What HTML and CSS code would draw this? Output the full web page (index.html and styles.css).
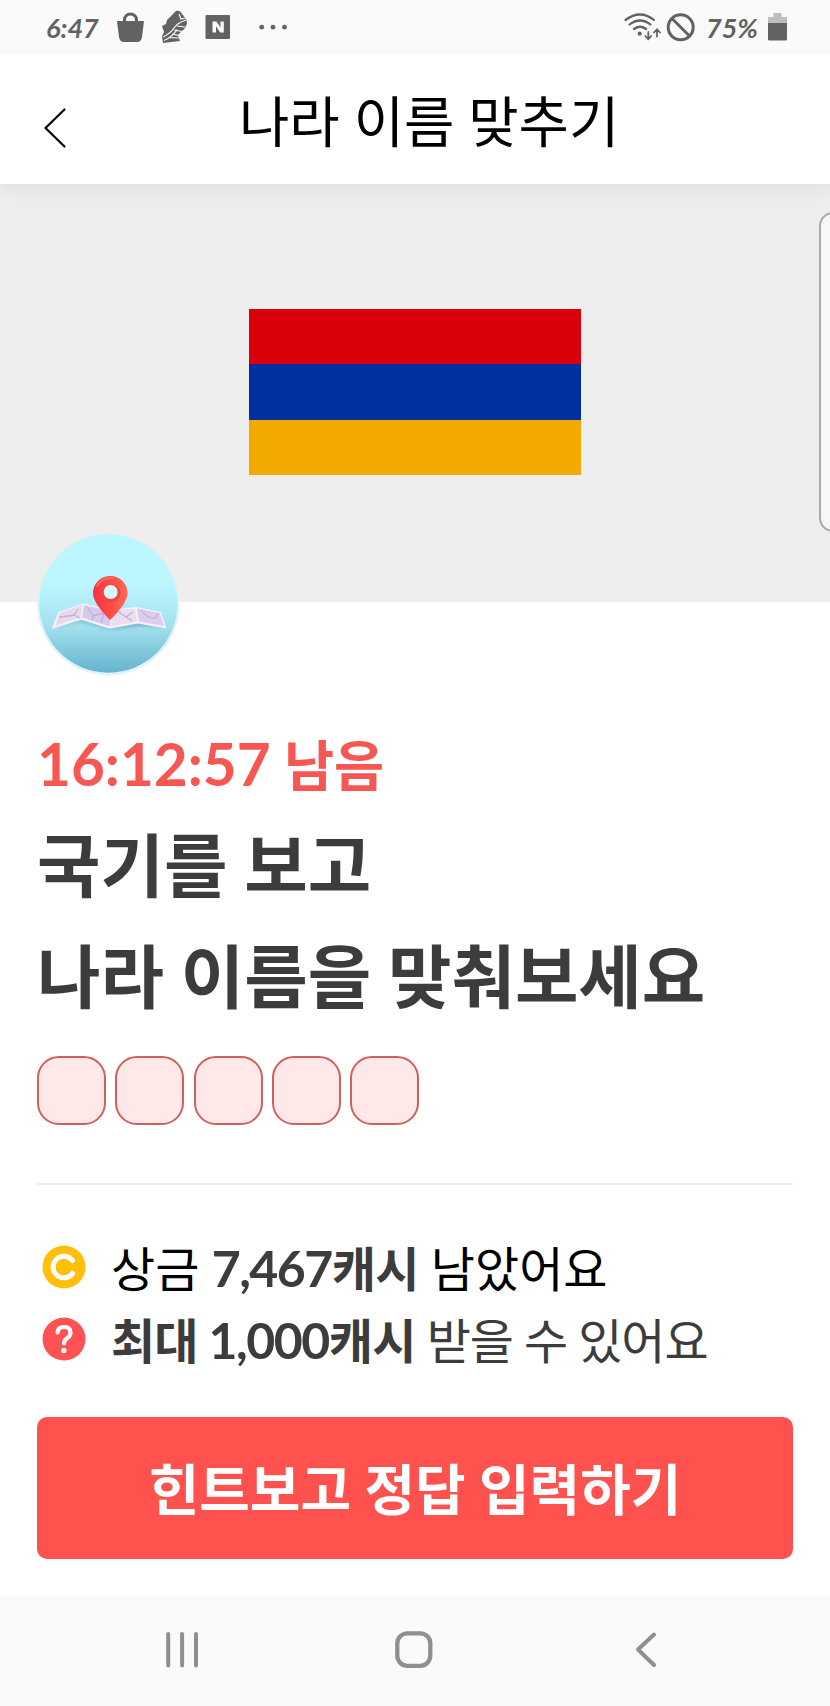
FILE: index.html
```html
<!DOCTYPE html>
<html lang="ko">
<head>
<meta charset="utf-8">
<title>나라 이름 맞추기</title>
<link rel="stylesheet" href="styles.css">
</head>
<body>
<div class="screen">
  <div class="status">
    <span class="clock">6:47</span>
    <svg class="status-icons" width="180" height="55" viewBox="110 0 180 55">
      <path d="M117 21h27l-2 16q-.6 5-5 5h-13q-4.400 0-5-5z" fill="#626262"/>
      <path d="M124.500 22v-2.500a6 5.500 0 0 1 12 0V22" fill="none" stroke="#626262" stroke-width="3"/>
      <path d="M162 26l4-2 1-4 7-7 2-2q4-1 6 3 5 5 5 9-1 5-5 8l-4 4 2 6-17 2-1-7 2-4z" fill="#626262"/>
      <path d="M163 37q8-4 11-9t12-8M164 40.500q9-4 13-11M177 26l8 1M174 30l8 1.500M172 34l7 1.500M169 37.500l10 .5M179 14l2 5 4-1" fill="none" stroke="#fafafa" stroke-width="1.200"/>
      <rect x="205.500" y="15" width="24.500" height="24" rx="1" fill="#626262"/>
      <path d="M212.500 32.500V21.500h4l4 6v-6h3.300v11h-3.600l-4.200-6.200v6.200z" fill="#fafafa"/>
      <g fill="#626262"><circle cx="261.700" cy="27.200" r="2.400"/><circle cx="273" cy="27.200" r="2.400"/><circle cx="284.500" cy="27.200" r="2.400"/></g>
    </svg>
    <svg class="radio-icons" width="74" height="55" viewBox="622 0 74 55">
      <g fill="none" stroke="#626262" stroke-width="2.200" stroke-linecap="round">
        <path d="M624.500 20q14.500-11 28.500 0M628.500 24.500q10.500-8 21 0M633 29q6-4.500 12 0"/>
        <path d="M647.300 32v7m-3-3 3 3.200 3-3.200M656 36.500v-7m-3 3 3-3.200 3 3.200" stroke-width="1.800"/>
        <circle cx="679.700" cy="27.300" r="12.500" stroke-width="3"/>
        <path d="M671 18.500l17.500 17.500" stroke-width="3"/>
      </g>
      <circle cx="638.700" cy="33.700" r="2.100" fill="#626262"/>
    </svg>
    <span class="percent">75%</span>
    <svg class="battery" width="19" height="28" viewBox="0 0 19 28">
      <path d="M5.500 0h8v4H19v6H0V4h5.500z" fill="#bdbdbd"/>
      <path d="M0 10h19v16q0 1.500-1.500 1.500h-16Q0 27.500 0 26z" fill="#626262"/>
    </svg>
  </div>
  <header class="header">
    <svg class="back" width="24" height="42" viewBox="0 0 24 42"><path d="M21.500 2.500 2.500 21 21.500 39.500" fill="none" stroke="#000" stroke-width="2.200" stroke-linecap="round" stroke-linejoin="round"/></svg>
    <h1 class="title">나라 이름 맞추기</h1>
  </header>
  <section class="hero">
    <div class="flag"><i class="red"></i><i class="blue"></i><i class="orange"></i></div>
    <div class="edge-panel"></div>
    <svg class="avatar" width="144" height="144" viewBox="36 532 144 144">
      <defs>
        <linearGradient id="sky" x1="0" y1="0" x2="0" y2="1"><stop offset="0" stop-color="#bcf6ff"/><stop offset=".35" stop-color="#bcf6ff"/><stop offset=".65" stop-color="#a5e2ee"/><stop offset="1" stop-color="#65b4cf"/></linearGradient>
        <linearGradient id="pin" x1="0" y1="0" x2="1" y2="0"><stop offset="0" stop-color="#f8303c"/><stop offset="1" stop-color="#ff6a55"/></linearGradient>
        <linearGradient id="ring" x1="0" y1="0" x2="0" y2="1"><stop offset="0" stop-color="#d8eff3"/><stop offset="1" stop-color="#e0f5fb"/></linearGradient>
        <filter id="soft"><feGaussianBlur stdDeviation="1.500"/></filter>
      </defs>
      <circle cx="108.400" cy="604.400" r="71" fill="url(#ring)"/>
      <circle cx="108.400" cy="603.700" r="69" fill="url(#sky)"/>
      <path d="M55 628l27-8 28 9 29-7 26 5-26-1-29 4-29-8z" fill="#568ea7" opacity=".6" filter="url(#soft)"/>
      <path d="M58.500 612 83 603.500l27 6 26.500-2.500 24.500 5 5.500 16.500-28.500-5L109 628.500l-28-9-29.500 9.500z" fill="#f6f1fc"/>
      <path d="M60 613l22-8-1.500 12.500-25 8z" fill="#e6d9e8"/>
      <path d="M84 605l26 6v15.500L82 617.500z" fill="#d8caef"/>
      <path d="M112 611l23-2.500 2 13-26 5z" fill="#ebdeee"/>
      <path d="M137 608.500l22.500 4.500 4.500 13-25-4.500z" fill="#dccdef"/>
      <path d="M59 617q11-1 15-2l4-6M74 615l6 3M87 607l6 9 11-3M93 616l-1 4M104 613l-3 10M117 611l9 6 7-5M126 617l6 4M141 610q6 9 15 8l2-5" fill="none" stroke="#c2b0d5" stroke-width="1.300"/>
      <path d="M110 620q-17-17-17-27a17.300 17 0 0 1 34.600 0q0 10-17.600 27z" fill="url(#pin)"/>
      <circle cx="111.500" cy="593" r="9" fill="#f14445"/>
      <circle cx="110.700" cy="592" r="7" fill="#d7f7fb"/>
      <path d="M97 586q5-9 15-8" fill="none" stroke="#ff7772" stroke-width="2" stroke-linecap="round" opacity=".7"/>
    </svg>
  </section>
  <main class="content">
    <p class="timer"><span class="time">16:12:57</span> 남음</p>
    <h2 class="question">국기를 보고<br>나라 이름을 맞춰보세요</h2>
    <div class="boxes"><i class="box"></i><i class="box"></i><i class="box"></i><i class="box"></i><i class="box"></i></div>
    <ul class="rewards">
      <li class="reward">
        <svg class="badge" width="44" height="44" viewBox="0 0 44 44"><circle cx="22" cy="22" r="21.500" fill="#ffbf0b"/><path d="M30.500 15.500a10.800 10.800 0 1 0 0 13" fill="none" stroke="#fff" stroke-width="5" stroke-linecap="round"/></svg>
        <span class="prize"><span class="black">상금</span> <b><span class="amount">7,467</span>캐시</b> <span class="black">남았어요</span></span>
      </li>
      <li class="reward">
        <svg class="badge" width="44" height="44" viewBox="0 0 44 44"><circle cx="22" cy="22" r="21.500" fill="#ff5252"/><path d="M15.500 15.500q.5-5.500 6.500-5.500 6.500 0 6.500 5.500 0 3.500-3.500 5.700-3 2-3 5.300" fill="none" stroke="#fff" stroke-width="4.200" stroke-linecap="round"/><circle cx="21.800" cy="33.500" r="2.700" fill="#fff"/></svg>
        <span class="maximum"><b>최대 <span class="amount">1,000</span>캐시</b> 받을 수 있어요</span>
      </li>
    </ul>
    <button class="answer">힌트보고 정답 입력하기</button>
  </main>
  <nav class="nav">
    <svg width="830" height="110" viewBox="0 1596 830 110" fill="none" stroke="#8f8f8f" stroke-linecap="round">
      <path d="M168.200 1634v31.500M182.100 1634v31.500M196 1634v31.500" stroke-width="4"/>
      <rect x="397.300" y="1633.300" width="33" height="32.500" rx="10" stroke-width="4.300"/>
      <path d="M654 1634.500 638 1649.500l16 15.500" stroke-width="4" stroke-linejoin="round"/>
    </svg>
  </nav>
</div>
</body>
</html>
```
FILE: styles.css
```css
* { box-sizing: border-box; margin: 0; padding: 0; }
body { width: 830px; background: #fff; font-family: Lato, "Noto Sans CJK KR", sans-serif; color: #3c3c3c; }
svg { display: block; flex: none; }
i { display: block; }
.screen { width: 830px; height: 1706px; display: flex; flex-direction: column; overflow: hidden; }
.status { height: 55px; flex: none; background: #fafafa; display: flex; align-items: center; padding-left: 46px; color: #626262; position: relative; z-index: 2; }
.clock, .percent { font-size: 27px; font-style: italic; font-weight: 700; line-height: 54px; white-space: nowrap; }
.clock { width: 64px; }
.radio-icons { margin-left: 333px; }
.percent { width: 71px; padding-left: 9px; }
.battery { margin-top: -1px; }
.header { height: 129px; flex: none; background: #fff; display: flex; align-items: center; padding-left: 43px; box-shadow: 0 3px 22px rgba(0,0,0,.08); position: relative; z-index: 1; }
.back { margin-top: 16px; }
.title { margin: 2px 0 0 172px; font-size: 54.700px; font-weight: 400; line-height: 80px; color: #000; white-space: nowrap; }
.hero { height: 418px; flex: none; background: #eee; display: flex; justify-content: center; padding-top: 125px; position: relative; }
.flag { width: 332px; height: 166px; display: grid; grid-template-rows: repeat(3, 1fr); }
.red { background: #d90009; }
.blue { background: #0030a0; }
.orange { background: #f2a900; }
.edge-panel { position: absolute; left: 818.500px; top: 28px; width: 30px; height: 320px; border: 2px solid #aaa; border-radius: 14px; background: #f7f7f7; }
.avatar { position: absolute; left: 36px; top: 348px; }
.content { height: 994px; flex: none; padding: 121px 37px 0; display: flex; flex-direction: column; }
.timer { height: 80px; font-size: 54.500px; line-height: 80px; font-weight: 700; color: #f75752; white-space: nowrap; }
.time { font-size: 58.500px; }
.question { margin-top: 7px; font-size: 69px; line-height: 111px; font-weight: 700; white-space: nowrap; }
.boxes { display: flex; gap: 9.300px; margin-top: 24px; }
.box { width: 69px; height: 69px; border: 2px solid #d0605d; border-radius: 22px; background: #ffe8e8; }
.rewards { list-style: none; margin-top: 58px; border-top: 2px solid #ededed; padding-top: 47px; }
.reward { display: flex; align-items: center; height: 72px; padding-left: 5px; font-size: 48px; line-height: 72px; white-space: nowrap; }
.badge { margin-top: -2px; }
.prize, .maximum { margin-left: 25px; }
.maximum { letter-spacing: -1.100px; }
.reward b { letter-spacing: -.8px; }
.amount { font-size: 50px; letter-spacing: -1.500px; }
.black { color: #000; }
.answer { margin-top: 41px; height: 142px; padding-top: 2px; border: 0; border-radius: 10px; background: #ff524f; color: #fff; font: 700 55px/80px Lato, "Noto Sans CJK KR", sans-serif; white-space: nowrap; }
.nav { height: 110px; flex: none; background: #fafafa; }
```
